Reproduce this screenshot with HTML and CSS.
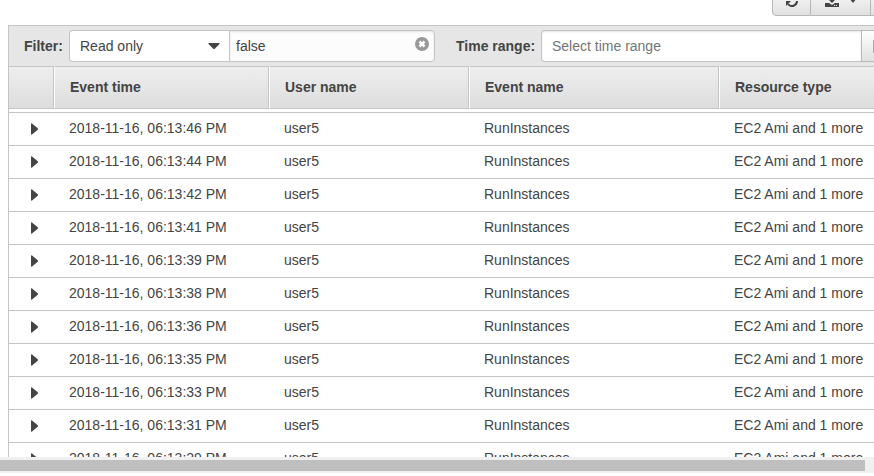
FILE: index.html
```html
<!DOCTYPE html>
<html lang="en">
<head>
  <meta charset="UTF-8">
  <meta name="viewport" content="width=device-width, initial-scale=1.0">
  <title>Event history</title>
  <link rel="stylesheet" href="styles.css">
</head>
<body>
  <div class="page">
    <div class="toolbar">
      <div class="button-group">
        <button class="refresh" type="button" aria-label="Refresh">
          <svg width="14" height="14" viewBox="0 0 14 14" fill="none" stroke="#444" stroke-width="2">
            <path d="M2 6a5 5 0 0 1 9-2M12 8a5 5 0 0 1-9 3"/>
            <path d="M13 1v5H8zM1 13V8h5z" fill="#444" stroke="none"/>
          </svg>
        </button>
        <button class="export" type="button" aria-label="Export">
          <svg width="14" height="14" viewBox="0 0 14 14" fill="#444">
            <path d="M5 0h4v5h3L7 10 2 5h3z"/>
            <path d="M0 10h4l3 2 3-2h4v4H0z"/>
            <path d="M9 12h1v1H9zM11 12h1v1h-1z" fill="#eee"/>
          </svg>
          <svg width="8" height="5" viewBox="0 0 8 5" fill="#444"><path d="M0 0h8L4 5z"/></svg>
        </button>
        <button class="settings" type="button" aria-label="Settings"></button>
      </div>
    </div>

    <div class="panel">
      <div class="filter-bar">
        <label for="attribute">Filter:</label>
        <div class="select-box">
          <select id="attribute">
            <option>Read only</option>
            <option>Event name</option>
            <option>User name</option>
            <option>Resource type</option>
          </select>
          <svg class="caret" width="12" height="6" viewBox="0 0 12 6" fill="#444"><path d="M1 0h10q1 0 .5 1L7 5.500q-1 1-2 0L.5 1Q0 0 1 0z"/></svg>
        </div>
        <div class="value-box">
          <input id="value" type="text" value="false" aria-label="Filter value">
          <button class="clear" type="button" aria-label="Clear filter">
            <svg width="14" height="14" viewBox="0 0 14 14">
              <circle cx="7" cy="7" r="7" fill="#999"/>
              <path d="M4.500 4.500l5 5M9.500 4.500l-5 5" stroke="#fff" stroke-width="2.500"/>
            </svg>
          </button>
        </div>
        <label class="range-label" for="range">Time range:</label>
        <input id="range" type="text" placeholder="Select time range">
        <button class="calendar" type="button" aria-label="Open calendar">
          <svg width="14" height="14" viewBox="0 0 14 14" fill="none" stroke="#aaa" stroke-width="2"><path d="M1 2h12v11H1zM1 5h12"/></svg>
        </button>
      </div>

      <table class="events">
        <colgroup>
          <col class="col-toggle">
          <col class="col-time">
          <col class="col-user">
          <col class="col-event">
          <col>
        </colgroup>
        <thead>
          <tr>
            <th></th>
            <th>Event time</th>
            <th>User name</th>
            <th>Event name</th>
            <th>Resource type</th>
          </tr>
        </thead>
        <tbody id="rows"></tbody>
      </table>
    </div>

    <div class="scrollbar"><div class="thumb"></div></div>
  </div>

  <script src="script.js"></script>
</body>
</html>
```

FILE: styles.css
```css
* {
  box-sizing: border-box;
}
body {
  margin: 0;
  background: #fff;
  color: #444;
  font: 14px/20px "Liberation Sans", Arial, sans-serif;
}
button, input, select {
  margin: 0;
  color: #444;
  font: inherit;
}
.page {
  display: flex;
  flex-direction: column;
  height: 100vh;
  padding-bottom: 3px;
  overflow: hidden;
}

/* action buttons */
.toolbar {
  display: flex;
  flex: none;
  align-items: flex-end;
  justify-content: flex-end;
  height: 16px;
  overflow: hidden;
}
.button-group {
  display: flex;
  margin-right: -36px;
}
.button-group button {
  display: flex;
  align-items: center;
  justify-content: center;
  gap: 10px;
  height: 32px;
  padding: 0;
  border: 1px solid #b8b8b8;
  border-left-width: 0;
  background: linear-gradient(#fff, #e0e0e0);
}
.button-group .refresh {
  width: 39px;
  border-left-width: 1px;
  border-radius: 4px 0 0 4px;
}
.button-group .export {
  width: 60px;
}
.button-group .settings {
  width: 39px;
}

/* filters */
.panel {
  flex: 1;
  min-height: 0;
  margin: 9px 0 0 8px;
  border: 1px solid #c4c4c4;
  border-width: 1px 0 0 1px;
  overflow: hidden;
}
.filter-bar {
  display: flex;
  align-items: center;
  padding: 4px 0 4px 15px;
  background: #e6e6e6;
}
.filter-bar label {
  flex: none;
  width: 45px;
  font-weight: bold;
}
.filter-bar .range-label {
  width: 85px;
  margin-left: 21px;
}
.filter-bar input,
.filter-bar select {
  display: block;
  width: 100%;
  height: 32px;
  padding: 0 10px;
  border: 1px solid #c4c4c4;
  border-radius: 4px;
  background: #fff;
  outline: none;
}
.select-box, .value-box {
  position: relative;
  flex: none;
}
.select-box {
  width: 160px;
}
.select-box select {
  appearance: none;
  border-right: 0;
  border-radius: 4px 0 0 4px;
}
.caret {
  position: absolute;
  top: 13px;
  right: 9px;
  pointer-events: none;
}
.value-box {
  width: 206px;
}
.value-box input {
  padding: 0 28px 0 6px;
  border-radius: 0 4px 4px 0;
  background: #fcfcfc;
  box-shadow: inset 0 1px 2px #e4e4e4;
}
.clear {
  position: absolute;
  top: 7px;
  right: 6px;
  display: flex;
  padding: 0;
  border: 0;
  background: none;
}
.filter-bar #range {
  flex: 1;
  width: 0;
  border-right: 0;
  border-radius: 4px 0 0 4px;
  box-shadow: inset 0 1px 2px #e4e4e4;
}
#range::placeholder {
  color: #757575;
}
.calendar {
  flex: none;
  width: 37px;
  height: 32px;
  margin-right: -24px;
  padding: 0 11px;
  border: 1px solid #b8b8b8;
  background: linear-gradient(#fff, #e0e0e0);
}
.calendar svg {
  display: block;
}

/* events */
.events {
  width: 100%;
  table-layout: fixed;
  border-spacing: 0;
}
.col-toggle {
  width: 45px;
}
.col-time {
  width: 215px;
}
.col-user {
  width: 200px;
}
.col-event {
  width: 250px;
}
.events th {
  height: 43px;
  padding: 0 15px 2px;
  border: 1px solid #c4c4c4;
  border-left-color: #fff;
  background: linear-gradient(#eee, #ddd);
  text-align: left;
}
.events th:first-child {
  border-left: 0;
}
.events th:last-child {
  border-right: 0;
}
.events tbody::before {
  content: "";
  display: block;
  height: 3px;
}
.events td {
  height: 33px;
  padding: 0 0 2px 15px;
  border-top: 1px solid #c4c4c4;
  white-space: nowrap;
}
.toggle {
  display: flex;
  width: 20px;
  height: 20px;
  align-items: center;
  justify-content: center;
  padding: 2px 0 0;
  border: 0;
  background: none;
}

.scrollbar {
  flex: none;
  height: 16px;
  padding: 3px 0 2px;
  background: #f0f0f0;
}
.thumb {
  width: 99%;
  height: 11px;
  background: #bfbfbf;
}
```

FILE: script.js
```js
const times = [
  '06:13:46', '06:13:44', '06:13:42', '06:13:41', '06:13:39', '06:13:38',
  '06:13:36', '06:13:35', '06:13:33', '06:13:31', '06:13:29'
];

document.getElementById('rows').innerHTML = times.map(time => `
  <tr>
    <td>
      <button class="toggle" type="button" aria-label="Show details">
        <svg width="7" height="12" viewBox="0 0 7 12" fill="#444"><path d="M0 1Q0 0 1 .5L6.500 5q1 1 0 2L1 11.500Q0 12 0 11z"/></svg>
      </button>
    </td>
    <td>2018-11-16, ${time} PM</td>
    <td>user5</td>
    <td>RunInstances</td>
    <td>EC2 Ami and 1 more</td>
  </tr>`).join('');
```
